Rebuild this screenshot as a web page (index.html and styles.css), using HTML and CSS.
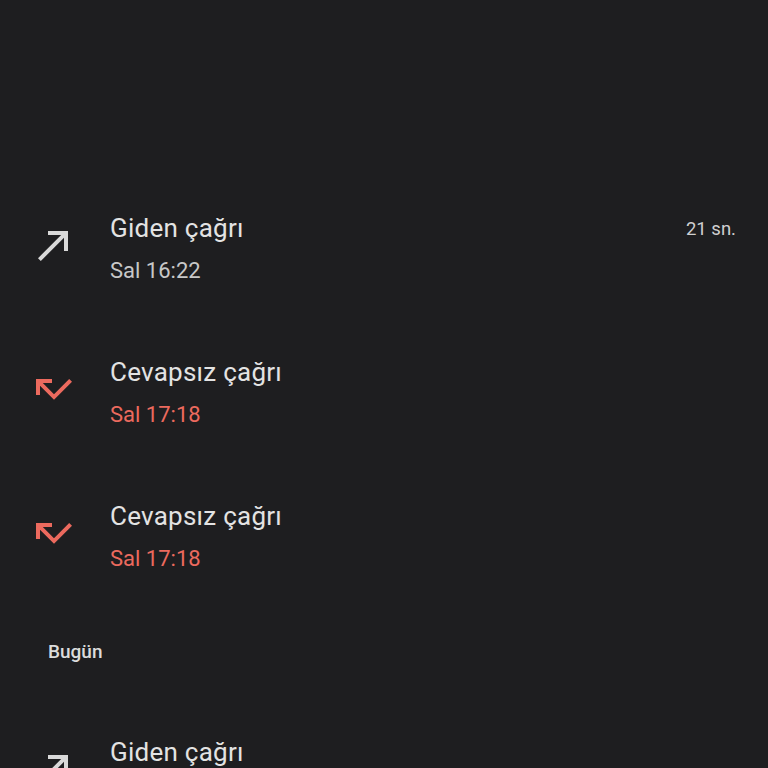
FILE: index.html
```html
<!DOCTYPE html>
<html lang="tr">
<head>
<meta charset="utf-8">
<link rel="stylesheet" href="styles.css">
</head>
<body>
<div class="screen">
  <div class="top-space"></div>
  <ul class="calls">
    <li class="call">
      <svg class="icon out" viewBox="0 0 24 24"><path d="M9 5v2h6.59L4 18.59 5.41 20 17 8.41V15h2V5z"/></svg>
      <div class="info">
        <div class="title">Giden çağrı</div>
        <div class="sub">Sal 16:22</div>
      </div>
      <div class="dur">21 sn.</div>
    </li>
    <li class="call">
      <svg class="icon missed" viewBox="0 0 24 24"><path d="M19.59 7L12 14.59 6.41 9H11V7H3v8h2v-4.59l7 7 9-9z"/></svg>
      <div class="info">
        <div class="title">Cevapsız çağrı</div>
        <div class="sub red">Sal 17:18</div>
      </div>
    </li>
    <li class="call">
      <svg class="icon missed" viewBox="0 0 24 24"><path d="M19.59 7L12 14.59 6.41 9H11V7H3v8h2v-4.59l7 7 9-9z"/></svg>
      <div class="info">
        <div class="title">Cevapsız çağrı</div>
        <div class="sub red">Sal 17:18</div>
      </div>
    </li>
    <li class="header">Bugün</li>
    <li class="call">
      <svg class="icon out" viewBox="0 0 24 24"><path d="M9 5v2h6.59L4 18.59 5.41 20 17 8.41V15h2V5z"/></svg>
      <div class="info">
        <div class="title">Giden çağrı</div>
        <div class="sub">Sal 16:22</div>
      </div>
    </li>
  </ul>
</div>
</body>
</html>
```
FILE: styles.css
```css
html, body {
  margin: 0;
  padding: 0;
  background: #1e1e20;
  height: 768px;
  overflow: hidden;
}
.screen {
  font-family: Roboto, "Noto Sans", sans-serif;
  color: #e3e3e3;
}
.top-space {
  height: 177px;
}
.calls {
  list-style: none;
  margin: 0;
  padding: 0;
}
.call {
  height: 144px;
  display: flex;
  align-items: center;
  padding: 0 32px 0 30px;
}
.icon {
  width: 48px;
  height: 48px;
  flex: none;
  margin-bottom: 8px;
}
.icon.out { fill: #d9d9d9; }
.icon.missed { fill: #ec6a5e; }
.info {
  flex: 1;
  margin-left: 32px;
  display: flex;
  flex-direction: column;
  gap: 12px;
}
.title {
  font-size: 26px;
  line-height: 32px;
  letter-spacing: 0.25px;
  color: #e3e3e3;
}
.sub {
  font-size: 22px;
  line-height: 30px;
  color: #c8c8c8;
}
.sub.red { color: #ec6a5e; }
.dur {
  align-self: flex-start;
  margin-top: 41px;
  font-size: 18.5px;
  color: #d0d0d0;
}
.header {
  height: 92px;
  padding-left: 48px;
  padding-bottom: 8px;
  box-sizing: border-box;
  display: flex;
  align-items: center;
  font-size: 19px;
  font-weight: 500;
  color: #dcdcdc;
}
```
